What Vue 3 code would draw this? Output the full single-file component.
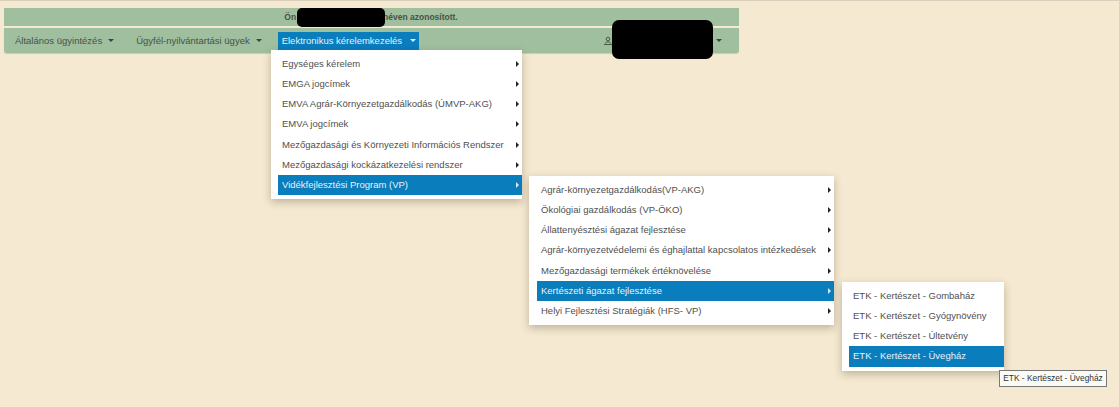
<script setup>
const first = [
  { t: 'Egységes kérelem' },
  { t: 'EMGA jogcímek' },
  { t: 'EMVA Agrár-Környezetgazdálkodás (ÚMVP-AKG)' },
  { t: 'EMVA jogcímek' },
  { t: 'Mezőgazdasági és Környezeti Információs Rendszer' },
  { t: 'Mezőgazdasági kockázatkezelési rendszer' },
  { t: 'Vidékfejlesztési Program (VP)', active: true },
]
const second = [
  { t: 'Agrár-környezetgazdálkodás(VP-AKG)' },
  { t: 'Ökológiai gazdálkodás (VP-ÖKO)' },
  { t: 'Állattenyésztési ágazat fejlesztése' },
  { t: 'Agrár-környezetvédelemi és éghajlattal kapcsolatos intézkedések' },
  { t: 'Mezőgazdasági termékek értéknövelése' },
  { t: 'Kertészeti ágazat fejlesztése', active: true },
  { t: 'Helyi Fejlesztési Stratégiák (HFS- VP)' },
]
const third = [
  { t: 'ETK - Kertészet - Gombaház' },
  { t: 'ETK - Kertészet - Gyógynövény' },
  { t: 'ETK - Kertészet - Últetvény' },
  { t: 'ETK - Kertészet - Üvegház', active: true },
]
</script>

<template>
  <div class="page">
    <div class="bars">
      <div class="notice"><b>Ön</b><span class="notice-gap"></span><b>néven azonosított.</b></div>
      <nav class="nav">
        <a class="nav-item">Általános ügyintézés<i class="caret"></i></a>
        <a class="nav-item">Ügyfél-nyilvántartási ügyek<i class="caret"></i></a>
        <a class="nav-item open">Elektronikus kérelemkezelés<i class="caret"></i></a>
        <div class="user">
          <svg class="user-icon" width="8" height="9" viewBox="0 0 8 9" fill="none" stroke="#4a5a48" stroke-width="1">
            <circle cx="4" cy="3" r="1.8" />
            <path d="M0 8.500h8M1.500 7.500c0-1 1-1.700 2.500-1.700s2.500 .7 2.500 1.700" />
          </svg>
          <i class="caret"></i>
        </div>
      </nav>
    </div>

    <div class="mask mask-name"></div>
    <div class="mask mask-user"></div>

    <ul class="menu menu-1">
      <li v-for="m in first" :key="m.t" :class="{ active: m.active }">{{ m.t }}<i class="arrow"></i></li>
    </ul>
    <ul class="menu menu-2">
      <li v-for="m in second" :key="m.t" :class="{ active: m.active }">{{ m.t }}<i class="arrow"></i></li>
    </ul>
    <ul class="menu menu-3">
      <li v-for="m in third" :key="m.t" :class="{ active: m.active }">{{ m.t }}</li>
    </ul>
    <div class="tooltip">ETK - Kertészet - Üvegház</div>
  </div>
</template>

<style>
html, body { margin: 0; background: #f5e9d1; }
</style>

<style scoped>
.page {
  position: relative;
  width: 1119px;
  height: 407px;
  overflow: hidden;
  background: #f5e9d1;
  border-top: 1px solid #d8cfbc;
  box-sizing: border-box;
  padding: 7px 0 0 4px;
  font-family: "Liberation Sans", Arial, sans-serif;
  font-size: 9.5px;
  color: #4a4a4a;
}
.bars { width: 735px; display: flex; flex-direction: column; gap: 2px; }
.notice {
  height: 18px;
  background: #a0bf9e;
  display: flex;
  align-items: center;
  justify-content: center;
  font-size: 8.5px;
  color: #4a5048;
  padding-right: 1px;
}
.notice-gap { width: 87px; }
.nav {
  height: 25px;
  background: #a0bf9e;
  border-radius: 0 0 3px 3px;
  display: flex;
  align-items: center;
  padding-left: 4px;
  box-shadow: 0 1px 1px #d2c9ae;
}
.nav-item {
  display: flex;
  align-items: center;
  height: 18px;
  padding: 0 5px 0 7px;
  margin-right: 10px;
  color: #45524a;
  white-space: nowrap;
}
.nav-item:nth-child(2) { margin-right: 11px; }
.nav-item.open { background: #0a7dbd; color: #e4f0f6; padding-left: 4px; padding-right: 3px; }
.caret {
  width: 0;
  height: 0;
  margin-left: 6px;
  border: 3px solid transparent;
  border-top-color: #3a463c;
  border-bottom: 0;
}
.open .caret { border-top-color: #e4f0f6; margin-left: 8px; }
.user {
  margin-left: auto;
  margin-right: 17px;
  display: flex;
  align-items: center;
  width: 118px;
  justify-content: space-between;
}
.user .caret { margin: 0; }
.mask { position: absolute; background: #000; }
.mask-name { left: 297px; top: 7px; width: 88px; height: 19px; border-radius: 5px; }
.mask-user { left: 612px; top: 19px; width: 101px; height: 39px; border-radius: 7px; }
.menu {
  position: absolute;
  margin: 0;
  list-style: none;
  background: #fff;
  box-shadow: 0 3px 8px rgba(60, 50, 30, 0.3);
  box-sizing: border-box;
  padding: 4.2px 0 4px 7px;
}
.menu li {
  position: relative;
  height: 20.1px;
  line-height: 20px;
  padding-left: 4px;
  white-space: nowrap;
  color: #4f4f4f;
}
.menu li.active { background: #0a7dbd; color: #e8f2f8; }
.arrow {
  position: absolute;
  right: 3px;
  top: 7px;
  width: 0;
  height: 0;
  border: 3px solid transparent;
  border-left-color: #222;
  border-right: 0;
}
.active .arrow { border-left-color: #d8e8f2; }
.menu-1 { left: 271px; top: 49px; width: 251px; height: 149px; }
.menu-2 { left: 529px; top: 175px; width: 305px; height: 149px; padding-left: 8px; }
.menu-3 { left: 842px; top: 281px; width: 162px; height: 89px; }
.menu-3 li { line-height: 19px; }
.tooltip {
  position: absolute;
  left: 999px;
  top: 369px;
  width: 108px;
  height: 17px;
  box-sizing: border-box;
  border: 1px solid #777;
  background: #fbfbf6;
  color: #333;
  font-size: 8.4px;
  line-height: 15px;
  text-align: center;
  white-space: nowrap;
}
</style>
